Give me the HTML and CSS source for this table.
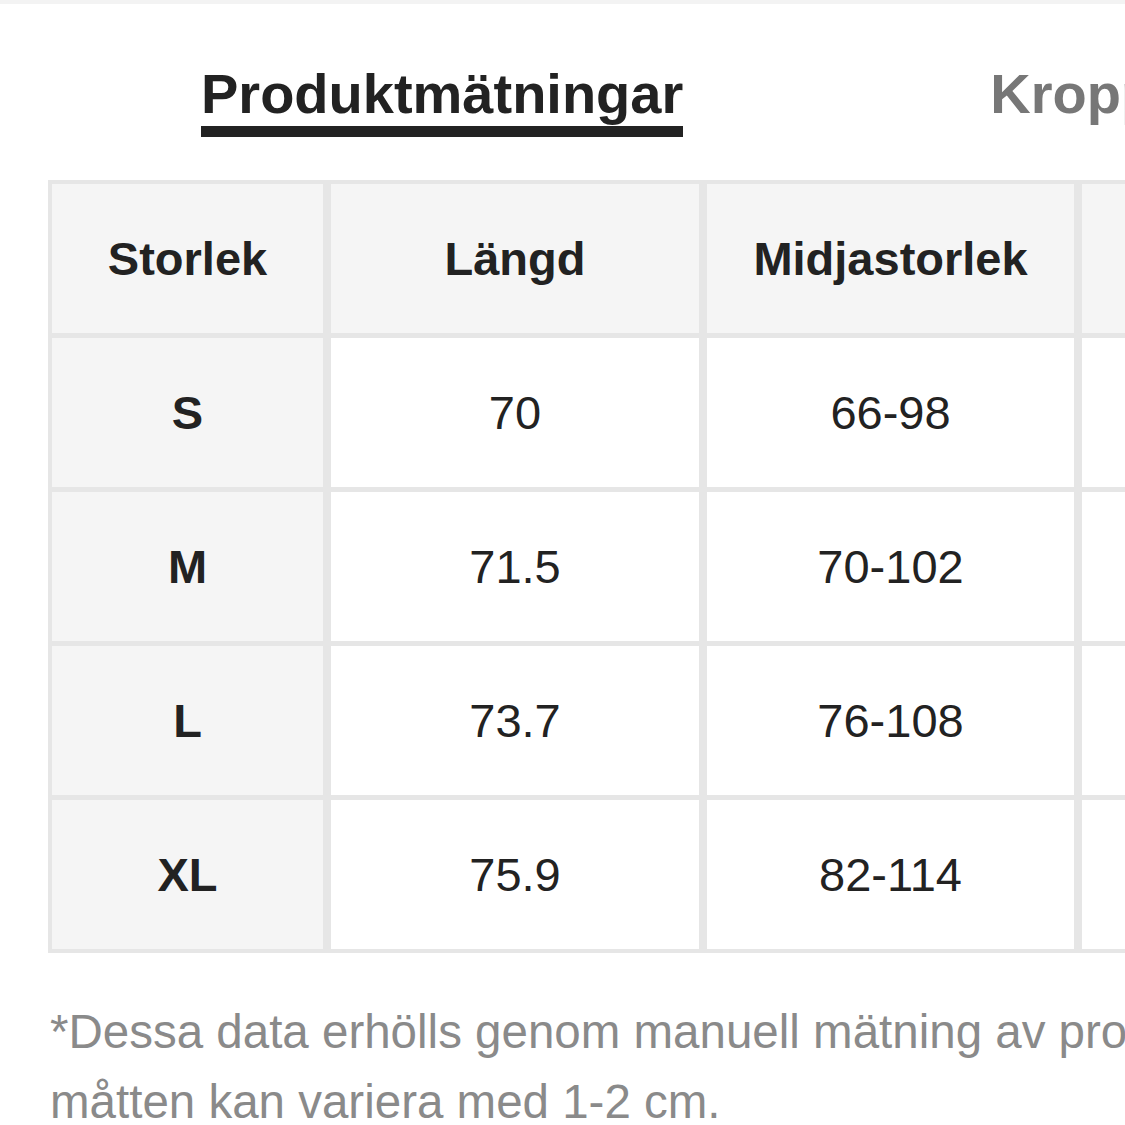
FILE: index.html
```html
<!DOCTYPE html>
<html lang="sv">
<head>
<meta charset="utf-8">
<title>Storleksguide</title>
<link rel="stylesheet" href="styles.css">
</head>
<body>
<div class="topband"></div>
<div class="page">
  <nav class="tabs">
    <span class="tab active">Produktmätningar</span>
    <span class="tab">Kroppsmätningar</span>
  </nav>
  <div class="size-table">
    <div class="cell head">Storlek</div>
    <div class="cell head">Längd</div>
    <div class="cell head">Midjastorlek</div>
    <div class="cell head">Höftstorlek</div>

    <div class="cell size">S</div>
    <div class="cell">70</div>
    <div class="cell">66-98</div>
    <div class="cell">96</div>

    <div class="cell size">M</div>
    <div class="cell">71.5</div>
    <div class="cell">70-102</div>
    <div class="cell">100</div>

    <div class="cell size">L</div>
    <div class="cell">73.7</div>
    <div class="cell">76-108</div>
    <div class="cell">106</div>

    <div class="cell size">XL</div>
    <div class="cell">75.9</div>
    <div class="cell">82-114</div>
    <div class="cell">112</div>
  </div>
  <p class="note">*Dessa data erhölls genom manuell mätning av produkten, måtten kan variera med 1-2 cm.</p>
</div>
</body>
</html>
```

FILE: styles.css
```css
html, body {
  margin: 0;
  padding: 0;
  background: #ffffff;
  overflow: hidden;
  width: 1125px;
  height: 1125px;
}

body {
  font-family: "Liberation Sans", Arial, Helvetica, sans-serif;
  color: #222222;
}

.topband {
  height: 4px;
  background: #f3f3f3;
}

.page {
  padding-left: 48px;
}

.tabs {
  display: flex;
  gap: 307px;
  padding-top: 58px;
  padding-left: 153px;
  white-space: nowrap;
}

.tab {
  font-size: 56px;
  font-weight: bold;
  color: #777777;
  line-height: 64px;
  flex-shrink: 0;
}

.tab.active {
  color: #222222;
  border-bottom: 11px solid #222222;
}

.size-table {
  display: grid;
  grid-template-columns: 271px 368px 367px 367px;
  grid-auto-rows: 149px;
  column-gap: 8px;
  row-gap: 5px;
  padding: 4px;
  margin-top: 43px;
  background: #e6e6e6;
  width: max-content;
}

.cell {
  display: flex;
  align-items: center;
  justify-content: center;
  background: #ffffff;
  font-size: 47px;
  color: #222222;
}

.cell.head,
.cell.size {
  background: #f5f5f5;
  font-weight: bold;
}

.note {
  margin: 44px 0 0 2px;
  font-size: 47.5px;
  line-height: 70px;
  color: #8a8a8a;
  width: 1320px;
}
```
